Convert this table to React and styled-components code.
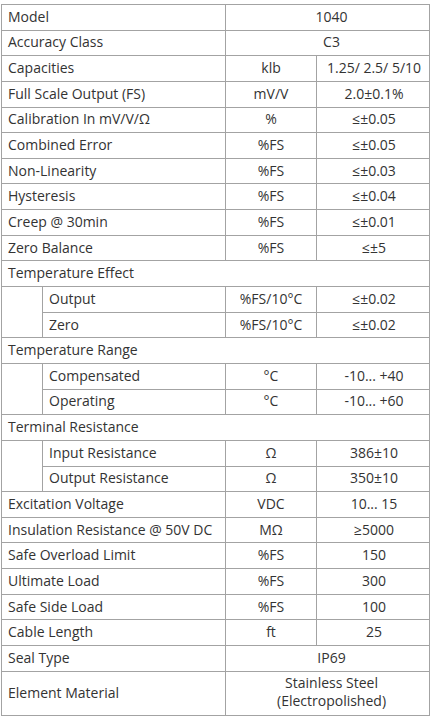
import React from 'react'
import styled, { createGlobalStyle } from 'styled-components'

const Global = createGlobalStyle`
   body {
      margin: 0;
      background: #fff;
   }
`

const Page = styled.div`
   padding: 4px 0 0 1px;
`

const Table = styled.table`
   width: 428px;
   border-collapse: collapse;
   table-layout: fixed;
   font-family: 'Open Sans', 'Noto Sans', sans-serif;
   font-size: 14px;
   color: #333;
   td {
      border: 1px solid #a3a3a3;
      height: 23.65px;
      padding: 0 0 1px;
      line-height: 16px;
      white-space: nowrap;
   }
`

const Label = styled.td`
   padding-left: 6px !important;
   text-align: left;
`

const Unit = styled.td`
   text-align: center;
`

const Value = styled.td`
   text-align: center;
   padding-left: ${(p) => (p.$wide ? '8px' : '2px')} !important;
`

const TallLabel = styled(Label)`
   height: 41px !important;
   padding-top: 1px !important;
`

const TwoLineValue = styled(Value)`
   line-height: 18px !important;
   padding-bottom: 3px !important;
`

const Indent = styled.td``

const rows = [
   { label: 'Model', value: '1040' },
   { label: 'Accuracy Class', value: 'C3' },
   { label: 'Capacities', unit: 'klb', value: '1.25/ 2.5/ 5/10' },
   { label: 'Full Scale Output (FS)', unit: 'mV/V', value: '2.0±0.1%' },
   { label: 'Calibration In mV/V/Ω', unit: '%', value: '≤±0.05' },
   { label: 'Combined Error', unit: '%FS', value: '≤±0.05' },
   { label: 'Non-Linearity', unit: '%FS', value: '≤±0.03' },
   { label: 'Hysteresis', unit: '%FS', value: '≤±0.04' },
   { label: 'Creep @ 30min', unit: '%FS', value: '≤±0.01' },
   { label: 'Zero Balance', unit: '%FS', value: '≤±5' },
   {
      label: 'Temperature Effect',
      sub: [
         { label: 'Output', unit: '%FS/10°C', value: '≤±0.02' },
         { label: 'Zero', unit: '%FS/10°C', value: '≤±0.02' },
      ],
   },
   {
      label: 'Temperature Range',
      sub: [
         { label: 'Compensated', unit: '°C', value: '-10... +40' },
         { label: 'Operating', unit: '°C', value: '-10... +60' },
      ],
   },
   {
      label: 'Terminal Resistance',
      sub: [
         { label: 'Input Resistance', unit: 'Ω', value: '386±10' },
         { label: 'Output Resistance', unit: 'Ω', value: '350±10' },
      ],
   },
   { label: 'Excitation Voltage', unit: 'VDC', value: '10... 15' },
   { label: 'Insulation Resistance @ 50V DC', unit: 'MΩ', value: '≥5000' },
   { label: 'Safe Overload Limit', unit: '%FS', value: '150' },
   { label: 'Ultimate Load', unit: '%FS', value: '300' },
   { label: 'Safe Side Load', unit: '%FS', value: '100' },
   { label: 'Cable Length', unit: 'ft', value: '25' },
   { label: 'Seal Type', value: 'IP69' },
]

function SpecRow({ row }) {
   if (row.sub) {
      return (
         <>
            <tr>
               <Label colSpan={4}>{row.label}</Label>
            </tr>
            {row.sub.map((s, i) => (
               <tr key={s.label}>
                  {i === 0 && <Indent rowSpan={row.sub.length} />}
                  <Label>{s.label}</Label>
                  <Unit>{s.unit}</Unit>
                  <Value>{s.value}</Value>
               </tr>
            ))}
         </>
      )
   }
   if (!row.unit) {
      return (
         <tr>
            <Label colSpan={2}>{row.label}</Label>
            <Value $wide colSpan={2}>
               {row.value}
            </Value>
         </tr>
      )
   }
   return (
      <tr>
         <Label colSpan={2}>{row.label}</Label>
         <Unit>{row.unit}</Unit>
         <Value>{row.value}</Value>
      </tr>
   )
}

function App() {
   return (
      <Page>
         <Global />
         <Table>
            <colgroup>
               <col style={{ width: 41 }} />
               <col style={{ width: 183 }} />
               <col style={{ width: 91 }} />
               <col style={{ width: 113 }} />
            </colgroup>
            <tbody>
               {rows.map((r) => (
                  <SpecRow key={r.label} row={r} />
               ))}
               <tr>
                  <TallLabel colSpan={2}>Element Material</TallLabel>
                  <TwoLineValue $wide colSpan={2}>
                     Stainless Steel
                     <br />
                     (Electropolished)
                  </TwoLineValue>
               </tr>
            </tbody>
         </Table>
      </Page>
   )
}

export default App
